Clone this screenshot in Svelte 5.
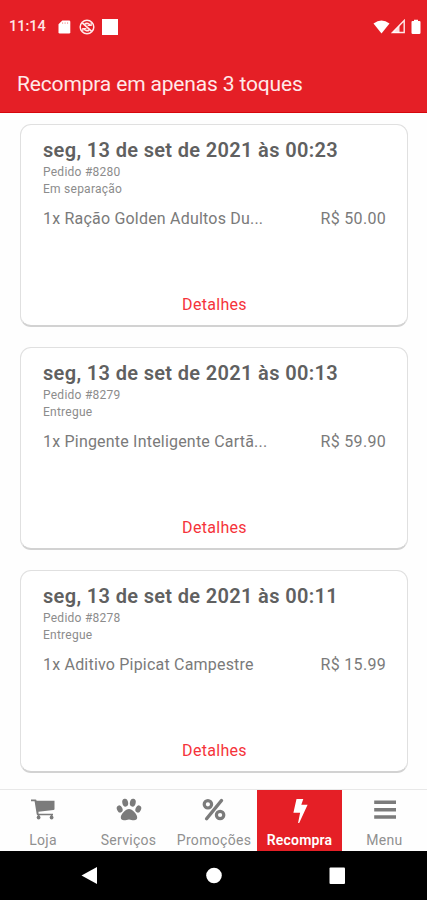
<script>
  const orders = [
    { date: 'seg, 13 de set de 2021 às 00:23', id: '#8280', status: 'Em separação', item: '1x Ração Golden Adultos Du...', price: 'R$ 50.00' },
    { date: 'seg, 13 de set de 2021 às 00:13', id: '#8279', status: 'Entregue', item: '1x Pingente Inteligente Cartã...', price: 'R$ 59.90' },
    { date: 'seg, 13 de set de 2021 às 00:11', id: '#8278', status: 'Entregue', item: '1x Aditivo Pipicat Campestre', price: 'R$ 15.99' }
  ];
  const tabs = [
    { name: 'Loja', icon: 'cart' },
    { name: 'Serviços', icon: 'paw' },
    { name: 'Promoções', icon: 'percent' },
    { name: 'Recompra', icon: 'bolt', active: true },
    { name: 'Menu', icon: 'menu' }
  ];
</script>

<div class="screen">
  <header>
    <div class="status">
      <span class="time">11:14</span>
      <svg class="sd" width="13" height="16" viewBox="0 0 13 16"><path d="M4.3 1.500H11q1.300 0 1.300 1.300v10.500q0 1.200-1.300 1.200H1.800Q.5 14.500.5 13.300V5.200Z" fill="#fff" /><path d="M4.600 3.200v1.800M7.100 3.200v1.800M9.600 3.200v1.800" stroke="#f3a0a3" stroke-width=".9" /></svg>
      <svg class="sync" width="16" height="16" viewBox="0 0 16 16" fill="none" stroke="#ffeaea"><circle cx="8" cy="8" r="6.800" stroke-width="1.500" /><path d="M4.700 9.500A3.700 3.700 0 0 0 10.200 11M11.300 6.500A3.700 3.700 0 0 0 5.800 5" stroke-width="1.700" /><path d="M3.300 3.800l9.400 8.600" stroke-width="1.700" /><path d="M8.600 6.400h3.600V3.200M7.400 9.600H3.800v3" stroke-width="1.200" /></svg>
      <i class="square"></i>
      <span class="grow"></span>
      <svg width="17" height="14" viewBox="0 0 17 14"><path d="M.5 3.500Q8.500-2.500 16.500 3.500L8.500 13.500Z" fill="#fff" /></svg>
      <svg class="signal" width="15" height="15" viewBox="0 0 15 15"><path d="M1.500 13.500L13.200 1.500V13.500Z" fill="none" stroke="#ffeaea" stroke-width="1.400" /><path d="M1 14L8.500 6.500v7.500Z" fill="#fff" opacity=".85" /></svg>
      <svg class="battery" width="10" height="16" viewBox="0 0 10 16"><path d="M3 .8h4v1.300h1.500q1 0 1 1v10.700q0 1.300-1.300 1.300H1.800Q.5 15.100.5 13.800V3.100q0-1 1-1H3Z" fill="#fff" /></svg>
    </div>
    <h1>Recompra em apenas 3 toques</h1>
  </header>

  <main>
    {#each orders as order}
      <article>
        <h2>{order.date}</h2>
        <p class="small">Pedido {order.id}</p>
        <p class="small">{order.status}</p>
        <div class="line"><span class="item">{order.item}</span><span class="price">{order.price}</span></div>
        <button>Detalhes</button>
      </article>
    {/each}
  </main>

  <nav>
    {#each tabs as tab}
      <div class="tab" class:active={tab.active}>
        <svg width="28" height="26" viewBox="0 0 28 26" fill="currentColor">
          {#if tab.icon === 'cart'}
            <path d="M2 2.600h4.500q.9 0 1.100 1.100H25.500v8.300q0 .9-1 1.100L9.400 14.800l.2 1.900H24v1.500H9Q7.900 18.200 7.700 17.200L5.600 4.300H2Z" />
            <circle cx="9.600" cy="20.500" r="1.900" /><circle cx="22.600" cy="20.500" r="1.900" />
            <path d="M8.800 17h1.600v3H8.800zM21.800 17h1.600v3h-1.600z" />
          {:else if tab.icon === 'paw'}
            <ellipse cx="10.200" cy="5.700" rx="2.900" ry="4" transform="rotate(-12 10.200 5.700)" />
            <ellipse cx="17.800" cy="5.700" rx="2.900" ry="4" transform="rotate(12 17.800 5.700)" />
            <ellipse cx="4.700" cy="12" rx="2.700" ry="3.700" transform="rotate(-25 4.700 12)" />
            <ellipse cx="23.300" cy="12" rx="2.700" ry="3.700" transform="rotate(25 23.300 12)" />
            <path d="M14 12.100C10.800 12.100 5.800 17.200 5.800 20.500C5.800 22.300 7 23.300 9 23.300C11 23.300 12.300 22.400 14 22.400S17 23.300 19 23.300C21 23.300 22.200 22.300 22.200 20.500C22.200 17.200 17.200 12.100 14 12.100Z" />
          {:else if tab.icon === 'percent'}
            <g fill="none" stroke="currentColor" stroke-width="3.200"><circle cx="7.900" cy="7.300" r="3.700" /><circle cx="20.100" cy="18" r="3.700" /><path d="M21.500 3.500L6.600 21.800" stroke-width="3.400" stroke-linecap="round" /></g>
          {:else if tab.icon === 'bolt'}
            <path d="M10.500 2h6.800l-2 5.800h6.300L13 26.400h-1L14.100 15.800H7.400Z" />
          {:else}
            <path d="M3.200 3.500H25v3.600H3.200zM3.200 10.900H25v3.500H3.200zM3.200 18.200H25v3.500H3.200z" />
          {/if}
        </svg>
        <span>{tab.name}</span>
      </div>
    {/each}
  </nav>

  <footer>
    <svg width="427" height="49" viewBox="0 0 427 49" fill="#fff"><path d="M81.500 24.500L97 16v17Z" /><circle cx="214" cy="24.500" r="7.800" /><rect x="329.500" y="16.500" width="15.500" height="16.500" rx="1" /></svg>
  </footer>
</div>

<style>
  :global(body) { margin: 0; background: #fff; }
  .screen { width: 427px; height: 900px; display: flex; flex-direction: column; overflow: hidden; font-family: Roboto, sans-serif; background: #fefefe; color: #777; }
  header { height: 113px; flex: none; box-sizing: border-box; background: #e51f26; border-bottom: 1px solid #d6060c; color: #fff; }
  .status { display: flex; align-items: center; height: 53px; padding: 0 6px 0 9px; }
  .time { width: 49px; font-size: 14.500px; font-weight: 500; letter-spacing: 0; color: #ffe6e6; }
  .status svg { flex: none; }
  .sync { margin-left: 8px; }
  .square { width: 16px; height: 16px; margin-left: 7px; background: #fff; }
  .grow { flex: 1; }
  .signal { margin-left: 1px; }
  .battery { margin-left: 5px; }
  h1 { margin: 0; padding-left: 17px; font-size: 21px; line-height: 26px; font-weight: 400; letter-spacing: -.16px; padding-top: 18px; color: #ffe9e9; white-space: nowrap; }
  main { flex: none; height: 676px; box-sizing: border-box; padding: 11px 19px 0 20px; display: flex; flex-direction: column; gap: 20px; }
  article { box-sizing: border-box; height: 203px; flex: none; border: 1.500px solid #e0e0e0; border-bottom: 2px solid #d2d2d2; border-radius: 11px; background: #fff; padding: 12px 21px 0 22px; display: flex; flex-direction: column; }
  h2 { margin: 0 0 1px; font-size: 20px; line-height: 26px; font-weight: 600; letter-spacing: .34px; color: #606060; white-space: nowrap; }
  .small { margin: 0; font-size: 12px; line-height: 17px; letter-spacing: .25px; color: #8c8c8c; }
  .line { display: flex; justify-content: space-between; margin-top: 11px; font-size: 16px; line-height: 20px; letter-spacing: .2px; color: #7a7a7a; white-space: nowrap; }
  .price { letter-spacing: .3px; }
  button { border: 0; background: none; padding: 0; margin: 66px auto 0; font: 400 16px/20px Roboto, sans-serif; letter-spacing: .3px; color: #f5333a; }
  nav { flex: none; height: 62px; box-sizing: border-box; border-top: 1px solid #e8e8e8; display: grid; grid-template-columns: 86px 85px 86px 85px 85px; }
  .tab { display: flex; flex-direction: column; align-items: center; padding-top: 7px; color: #7b7b7b; }
  .tab span { margin-top: 8px; font-size: 14px; line-height: 18px; letter-spacing: .3px; color: #909090; }
  .tab.active { background: #e51f26; color: #fff; }
  .tab.active span { color: #fff; font-weight: 600; letter-spacing: .2px; }
  footer { height: 49px; background: #000; }
  footer svg { display: block; }
</style>
